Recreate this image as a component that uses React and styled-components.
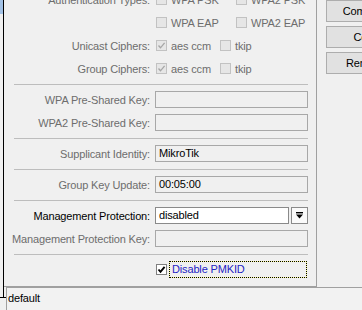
import React from "react";
import styled, { createGlobalStyle } from "styled-components";

const GlobalStyle = createGlobalStyle`
  html, body {
    margin: 0;
    padding: 0;
    background: #f0f0f0;
    overflow: hidden;
  }
  body {
    font-family: "Liberation Sans", Arial, sans-serif;
    font-size: 11px;
    letter-spacing: -0.15px;
  }
`;

const Window = styled.div`
  width: 362px;
  height: 310px;
  display: flex;
  overflow: hidden;
  background: #f0f0f0;
`;

const LeftEdge = styled.div`
  position: relative;
  width: 3px;
  flex: none;
  background: linear-gradient(#a3c2e6 0 14px, #f0f0f0 14px);
  border-right: 1px solid #000;
  height: 297px;
  &::after {
    content: "";
    position: absolute;
    left: 0;
    top: 297px;
    width: 6px;
    height: 1px;
    background: #000;
  }
`;

const Main = styled.div`
  flex: 1;
  display: flex;
  flex-direction: column;
  min-width: 0;
`;

const Top = styled.div`
  display: flex;
  height: 287px;
  overflow: hidden;
`;

const Panel = styled.div`
  width: 312px;
  flex: none;
  border-right: 1px solid #a0a0a0;
  border-bottom: 1px solid #a0a0a0;
  padding-bottom: 5px;
  display: flex;
  flex-direction: column;
  &:first-child > :first-child {
    margin-top: -12px;
  }
`;

const Row = styled.div`
  display: grid;
  grid-template-columns: 146px 153px;
  column-gap: 5px;
  height: 23px;
  align-items: center;
  flex: none;
`;

const Label = styled.div`
  text-align: right;
  white-space: nowrap;
  color: ${(p) => (p.$active ? "#000" : "#6d6d6d")};
`;

const Separator = styled.div`
  flex: none;
  height: 1px;
  background: #bdbdbd;
  margin: 4px 8px 3px 10px;
`;

const Field = styled.div`
  box-sizing: border-box;
  height: 17px;
  border: 1px solid ${(p) => (p.$active ? "#8a8a8a" : "#a8a8a8")};
  background: ${(p) => (p.$active ? "#fff" : "#f0f0f0")};
  padding-left: 3px;
  line-height: 15px;
  color: #000;
  white-space: nowrap;
  overflow: hidden;
`;

const Combo = styled.div`
  display: grid;
  grid-template-columns: 1fr 17px;
  column-gap: 2px;
`;

const DropButton = styled.div`
  box-sizing: border-box;
  height: 17px;
  border: 1px solid #8a8a8a;
  background: #fafafa;
  display: flex;
  align-items: center;
  justify-content: center;
`;

const CheckGroup = styled.div`
  display: grid;
  grid-template-columns: ${(p) => p.$cols};
  padding-left: 1px;
  align-items: center;
`;

const CheckItem = styled.div`
  display: flex;
  align-items: center;
  gap: 4px;
  white-space: nowrap;
  color: #6d6d6d;
`;

const Box = styled.div`
  box-sizing: border-box;
  width: 11px;
  height: 11px;
  flex: none;
  border: 1px solid ${(p) => (p.$active ? "#7f7f7f" : "#c2c2c2")};
  background: ${(p) => (p.$active ? "#fff" : "#e6e6e6")};
  display: flex;
  align-items: center;
  justify-content: center;
`;

const FocusLabel = styled.div`
  box-sizing: border-box;
  height: 17px;
  flex: 1;
  border: 1px dotted #000;
  background: linear-gradient(#f0f0f0, #f0f0f0) padding-box,
    linear-gradient(#fdfd9a, #fdfd9a) border-box;
  color: #2424c4;
  padding-left: 2px;
  line-height: 15px;
  margin-right: 1px;
`;

const PmkidRow = styled.div`
  display: flex;
  align-items: center;
  gap: 2px;
  padding-left: 1px;
`;

const Side = styled.div`
  flex: 1;
  padding-left: 9px;
  display: flex;
  flex-direction: column;
  gap: 4px;
  overflow: hidden;
`;

const Button = styled.div`
  box-sizing: border-box;
  width: 80px;
  height: 22px;
  flex: none;
  border: 1px solid #adadad;
  background: #e1e1e1;
  color: #000;
  text-align: center;
  line-height: 20px;
`;

const StatusBar = styled.div`
  flex: 1;
  margin-left: 2px;
  border-top: 1px solid #a0a0a0;
  border-left: 1px solid #a0a0a0;
  background: #f2f2f2;
  padding-left: 1px;
  line-height: 20px;
  color: #000;
`;

const Check = ({ checked, active }) => (
  <Box $active={active}>
    {checked && (
      <svg width="9" height="9" viewBox="0 0 9 9">
        <path
          d="M1.5 4.5 L3.5 6.8 L7.6 1.8"
          fill="none"
          stroke={active ? "#000" : "#a6a6a6"}
          strokeWidth={active ? 1.9 : 1.3}
        />
      </svg>
    )}
  </Box>
);

const Option = ({ label, checked }) => (
  <CheckItem>
    <Check checked={checked} />
    {label}
  </CheckItem>
);

const DownIcon = () => (
  <svg width="7" height="7" viewBox="0 0 7 7">
    <rect x="0" y="0" width="7" height="1.4" fill="#000" />
    <path d="M0 2.6 H7 L3.5 6.6 Z" fill="#000" />
  </svg>
);

export default function App() {
  return (
    <>
      <GlobalStyle />
      <Window>
        <LeftEdge />
        <Main>
          <Top>
            <Panel>
              <Row>
                <Label>Authentication Types:</Label>
                <CheckGroup $cols="80px 1fr">
                  <Option label="WPA PSK" />
                  <Option label="WPA2 PSK" />
                </CheckGroup>
              </Row>
              <Row>
                <span />
                <CheckGroup $cols="80px 1fr">
                  <Option label="WPA EAP" />
                  <Option label="WPA2 EAP" />
                </CheckGroup>
              </Row>
              <Row>
                <Label>Unicast Ciphers:</Label>
                <CheckGroup $cols="64px 1fr">
                  <Option label="aes ccm" checked />
                  <Option label="tkip" />
                </CheckGroup>
              </Row>
              <Row>
                <Label>Group Ciphers:</Label>
                <CheckGroup $cols="64px 1fr">
                  <Option label="aes ccm" checked />
                  <Option label="tkip" />
                </CheckGroup>
              </Row>
              <Separator />
              <Row>
                <Label>WPA Pre-Shared Key:</Label>
                <Field />
              </Row>
              <Row>
                <Label>WPA2 Pre-Shared Key:</Label>
                <Field />
              </Row>
              <Separator />
              <Row>
                <Label>Supplicant Identity:</Label>
                <Field>MikroTik</Field>
              </Row>
              <Separator />
              <Row>
                <Label>Group Key Update:</Label>
                <Field>00:05:00</Field>
              </Row>
              <Separator />
              <Row>
                <Label $active>Management Protection:</Label>
                <Combo>
                  <Field $active>disabled</Field>
                  <DropButton>
                    <DownIcon />
                  </DropButton>
                </Combo>
              </Row>
              <Row>
                <Label>Management Protection Key:</Label>
                <Field />
              </Row>
              <Separator />
              <Row>
                <span />
                <PmkidRow>
                  <Check checked active />
                  <FocusLabel>Disable PMKID</FocusLabel>
                </PmkidRow>
              </Row>
            </Panel>
            <Side>
              <Button>Comment</Button>
              <Button>Copy</Button>
              <Button>Remove</Button>
            </Side>
          </Top>
          <StatusBar>default</StatusBar>
        </Main>
      </Window>
    </>
  );
}
